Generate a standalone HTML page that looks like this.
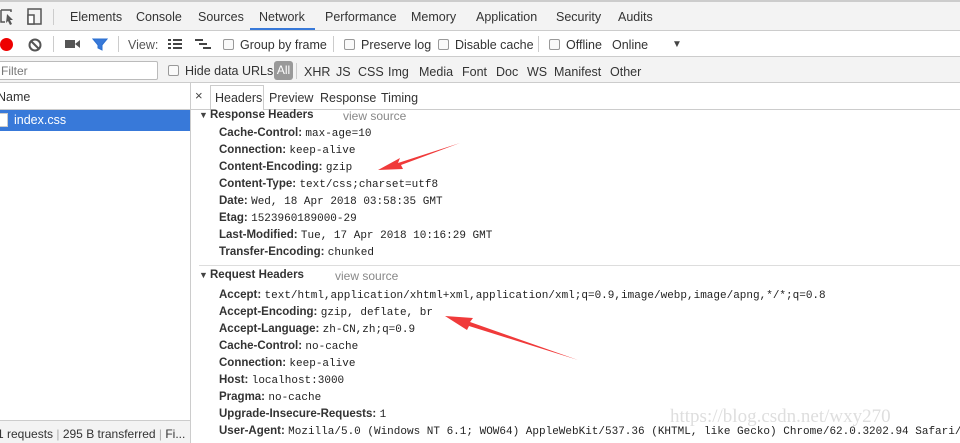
<!DOCTYPE html>
<html><head><meta charset="utf-8"><style>
*{margin:0;padding:0;box-sizing:border-box}
body{width:960px;height:443px;overflow:hidden;background:#fff;font-family:"Liberation Sans",sans-serif;font-size:12px;color:#333;position:relative}
.a{position:absolute;white-space:nowrap}
.k{font-weight:bold;color:#333;font-size:11.5px}
.v{font-family:"Liberation Mono",monospace;font-size:11px;color:#222}
.cb{display:inline-block;width:11px;height:11px;border:1px solid #999;border-radius:2px;background:#fafafa;vertical-align:-1px;margin-right:6px}
.t{color:#333;font-size:12.5px}
</style></head><body>
<div class="a" style="left:0;top:0;width:960px;height:31px;background:#f3f3f3;border-top:2px solid #ccc;border-bottom:1px solid #ccc"></div>
<svg class="a" style="left:0;top:8px" width="50" height="18"><path d="M1 2h10v2M1 2v12h4" stroke="#555" fill="none" stroke-width="1.5"/><path d="M7 6l6 6-3 0 2 4-2 1-2-4-2 2z" fill="#555"/><rect x="28" y="1" width="13" height="15" fill="none" stroke="#555" stroke-width="1.5"/><rect x="28" y="7" width="6" height="9" fill="#fff" stroke="#555" stroke-width="1.5"/></svg>
<div class="a" style="left:53px;top:9px;width:1px;height:16px;background:#ccc"></div>
<div class="a t" style="left:70px;top:10px">Elements</div>
<div class="a t" style="left:136px;top:10px">Console</div>
<div class="a t" style="left:198px;top:10px">Sources</div>
<div class="a t" style="left:259px;top:10px">Network</div>
<div class="a" style="left:250px;top:28px;width:65px;height:2px;background:#3879d9"></div>
<div class="a t" style="left:325px;top:10px">Performance</div>
<div class="a t" style="left:411px;top:10px">Memory</div>
<div class="a t" style="left:476px;top:10px">Application</div>
<div class="a t" style="left:556px;top:10px">Security</div>
<div class="a t" style="left:618px;top:10px">Audits</div>
<div class="a" style="left:0;top:31px;width:960px;height:26px;background:#fff;border-bottom:1px solid #ccc"></div>
<div class="a" style="left:0;top:38px;width:13px;height:13px;border-radius:50%;background:#e00"></div>
<svg class="a" style="left:28px;top:38px" width="14" height="14"><circle cx="7" cy="7" r="5.5" fill="none" stroke="#555" stroke-width="2"/><path d="M3 3l8 8" stroke="#555" stroke-width="2"/></svg>
<div class="a" style="left:53px;top:36px;width:1px;height:16px;background:#ccc"></div>
<svg class="a" style="left:65px;top:39px" width="16" height="10"><rect x="0" y="1" width="10" height="8" fill="#555"/><path d="M10 5l5-4v8z" fill="#555"/></svg>
<svg class="a" style="left:92px;top:38px" width="16" height="13"><path d="M1 1h14l-5 6v5l-4-2v-3z" fill="#3879d9" stroke="#2a6fd0"/></svg>
<div class="a" style="left:118px;top:36px;width:1px;height:16px;background:#ccc"></div>
<div class="a t" style="left:128px;top:38px;color:#555">View:</div>
<svg class="a" style="left:168px;top:39px" width="14" height="10"><path d="M0 1h3M5 1h9M0 5h3M5 5h9M0 9h3M5 9h9" stroke="#444" stroke-width="2"/></svg>
<svg class="a" style="left:195px;top:39px" width="16" height="10"><path d="M0 1h8M4 5h8M8 9h8" stroke="#444" stroke-width="2"/></svg>
<div class="a t" style="left:223px;top:38px"><span class="cb"></span>Group by frame</div>
<div class="a" style="left:333px;top:36px;width:1px;height:16px;background:#ccc"></div>
<div class="a t" style="left:344px;top:38px"><span class="cb"></span>Preserve log</div>
<div class="a t" style="left:438px;top:38px"><span class="cb"></span>Disable cache</div>
<div class="a" style="left:538px;top:36px;width:1px;height:16px;background:#ccc"></div>
<div class="a t" style="left:549px;top:38px"><span class="cb"></span>Offline</div>
<div class="a t" style="left:612px;top:38px">Online</div>
<div class="a" style="left:672px;top:39px;font-size:10px;color:#444">▼</div>
<div class="a" style="left:0;top:57px;width:960px;height:26px;background:#f3f3f3;border-bottom:1px solid #ccc"></div>
<div class="a" style="left:-4px;top:61px;width:162px;height:19px;background:#fff;border:1px solid #bbb;border-radius:2px;padding:2px 4px;color:#777;font-size:12px">Filter</div>
<div class="a t" style="left:168px;top:64px"><span class="cb"></span>Hide data URLs</div>
<div class="a" style="left:274px;top:61px;width:19px;height:19px;border-radius:3px;background:#999;color:#fff;font-size:12px;text-align:center;line-height:19px">All</div>
<div class="a" style="left:296px;top:63px;width:1px;height:16px;background:#ccc"></div>
<div class="a t" style="left:304px;top:65px">XHR</div>
<div class="a t" style="left:336px;top:65px">JS</div>
<div class="a t" style="left:358px;top:65px">CSS</div>
<div class="a t" style="left:388px;top:65px">Img</div>
<div class="a t" style="left:419px;top:65px">Media</div>
<div class="a t" style="left:462px;top:65px">Font</div>
<div class="a t" style="left:496px;top:65px">Doc</div>
<div class="a t" style="left:527px;top:65px">WS</div>
<div class="a t" style="left:554px;top:65px">Manifest</div>
<div class="a t" style="left:610px;top:65px">Other</div>
<div class="a" style="left:190px;top:83px;width:1px;height:360px;background:#ccc"></div>
<div class="a" style="left:0;top:109px;width:190px;height:1px;background:#ccc"></div>
<div class="a t" style="left:-3px;top:90px">Name</div>
<div class="a" style="left:0;top:110px;width:190px;height:21px;background:#3879d9"></div>
<div class="a" style="left:-2px;top:113px;width:10px;height:14px;background:#fff;border:1px solid #ccc"></div>
<div class="a" style="left:14px;top:113px;color:#fff;font-size:12.5px">index.css</div>
<div class="a" style="left:0;top:420px;width:190px;height:23px;background:#f3f3f3;border-top:1px solid #ccc"></div>
<div class="a" style="left:-3px;top:427px;font-size:12px;color:#333">1 requests <span style="color:#aaa">|</span> 295 B transferred <span style="color:#aaa">|</span> Fi...</div>
<div class="a" style="left:191px;top:109px;width:769px;height:1px;background:#ccc"></div>
<div class="a" style="left:195px;top:88px;font-size:13px;color:#444">×</div>
<div class="a" style="left:210px;top:85px;width:54px;height:25px;background:#fff;border:1px solid #ccc;border-bottom:none"></div>
<div class="a t" style="left:215px;top:91px">Headers</div>
<div class="a t" style="left:269px;top:91px">Preview</div>
<div class="a t" style="left:320px;top:91px">Response</div>
<div class="a t" style="left:381px;top:91px">Timing</div>
<div class="a" style="left:199px;top:110px;font-size:9px;color:#444">▼</div>
<div class="a k" style="left:210px;top:109px">Response Headers</div>
<div class="a" style="left:343px;top:109px;color:#888;font-size:12px">view source</div>
<div class="a" style="left:219px;top:125px"><span class="k">Cache-Control:</span> <span class="v">max-age=10</span></div>
<div class="a" style="left:219px;top:142px"><span class="k">Connection:</span> <span class="v">keep-alive</span></div>
<div class="a" style="left:219px;top:159px"><span class="k">Content-Encoding:</span> <span class="v">gzip</span></div>
<div class="a" style="left:219px;top:176px"><span class="k">Content-Type:</span> <span class="v">text/css;charset=utf8</span></div>
<div class="a" style="left:219px;top:193px"><span class="k">Date:</span> <span class="v">Wed, 18 Apr 2018 03:58:35 GMT</span></div>
<div class="a" style="left:219px;top:210px"><span class="k">Etag:</span> <span class="v">1523960189000-29</span></div>
<div class="a" style="left:219px;top:227px"><span class="k">Last-Modified:</span> <span class="v">Tue, 17 Apr 2018 10:16:29 GMT</span></div>
<div class="a" style="left:219px;top:244px"><span class="k">Transfer-Encoding:</span> <span class="v">chunked</span></div>
<div class="a" style="left:199px;top:265px;width:761px;height:1px;background:#ddd"></div>
<div class="a" style="left:199px;top:270px;font-size:9px;color:#444">▼</div>
<div class="a k" style="left:210px;top:269px">Request Headers</div>
<div class="a" style="left:335px;top:269px;color:#888;font-size:12px">view source</div>
<div class="a" style="left:219px;top:287px"><span class="k">Accept:</span> <span class="v">text/html,application/xhtml+xml,application/xml;q=0.9,image/webp,image/apng,*/*;q=0.8</span></div>
<div class="a" style="left:219px;top:304px"><span class="k">Accept-Encoding:</span> <span class="v">gzip, deflate, br</span></div>
<div class="a" style="left:219px;top:321px"><span class="k">Accept-Language:</span> <span class="v">zh-CN,zh;q=0.9</span></div>
<div class="a" style="left:219px;top:338px"><span class="k">Cache-Control:</span> <span class="v">no-cache</span></div>
<div class="a" style="left:219px;top:355px"><span class="k">Connection:</span> <span class="v">keep-alive</span></div>
<div class="a" style="left:219px;top:372px"><span class="k">Host:</span> <span class="v">localhost:3000</span></div>
<div class="a" style="left:219px;top:389px"><span class="k">Pragma:</span> <span class="v">no-cache</span></div>
<div class="a" style="left:219px;top:406px"><span class="k">Upgrade-Insecure-Requests:</span> <span class="v">1</span></div>
<div class="a" style="left:219px;top:423px"><span class="k">User-Agent:</span> <span class="v">Mozilla/5.0 (Windows NT 6.1; WOW64) AppleWebKit/537.36 (KHTML, like Gecko) Chrome/62.0.3202.94 Safari/537.36</span></div>
<div class="a" style="left:670px;top:406px;font-family:'Liberation Serif',serif;font-size:19px;color:rgba(190,190,190,0.5)">https://blog.csdn.net/wxy270</div>
<svg class="a" style="left:0;top:0" width="960" height="443">
<path d="M460 143 L398 163 L400 158 L378 170 L403 169 L401 165 Z" fill="#f03a3a"/>
<path d="M578 360 L470 322 L473 318 L445 316 L467 330 L469 326 Z" fill="#f03a3a"/>
</svg>
</body></html>
